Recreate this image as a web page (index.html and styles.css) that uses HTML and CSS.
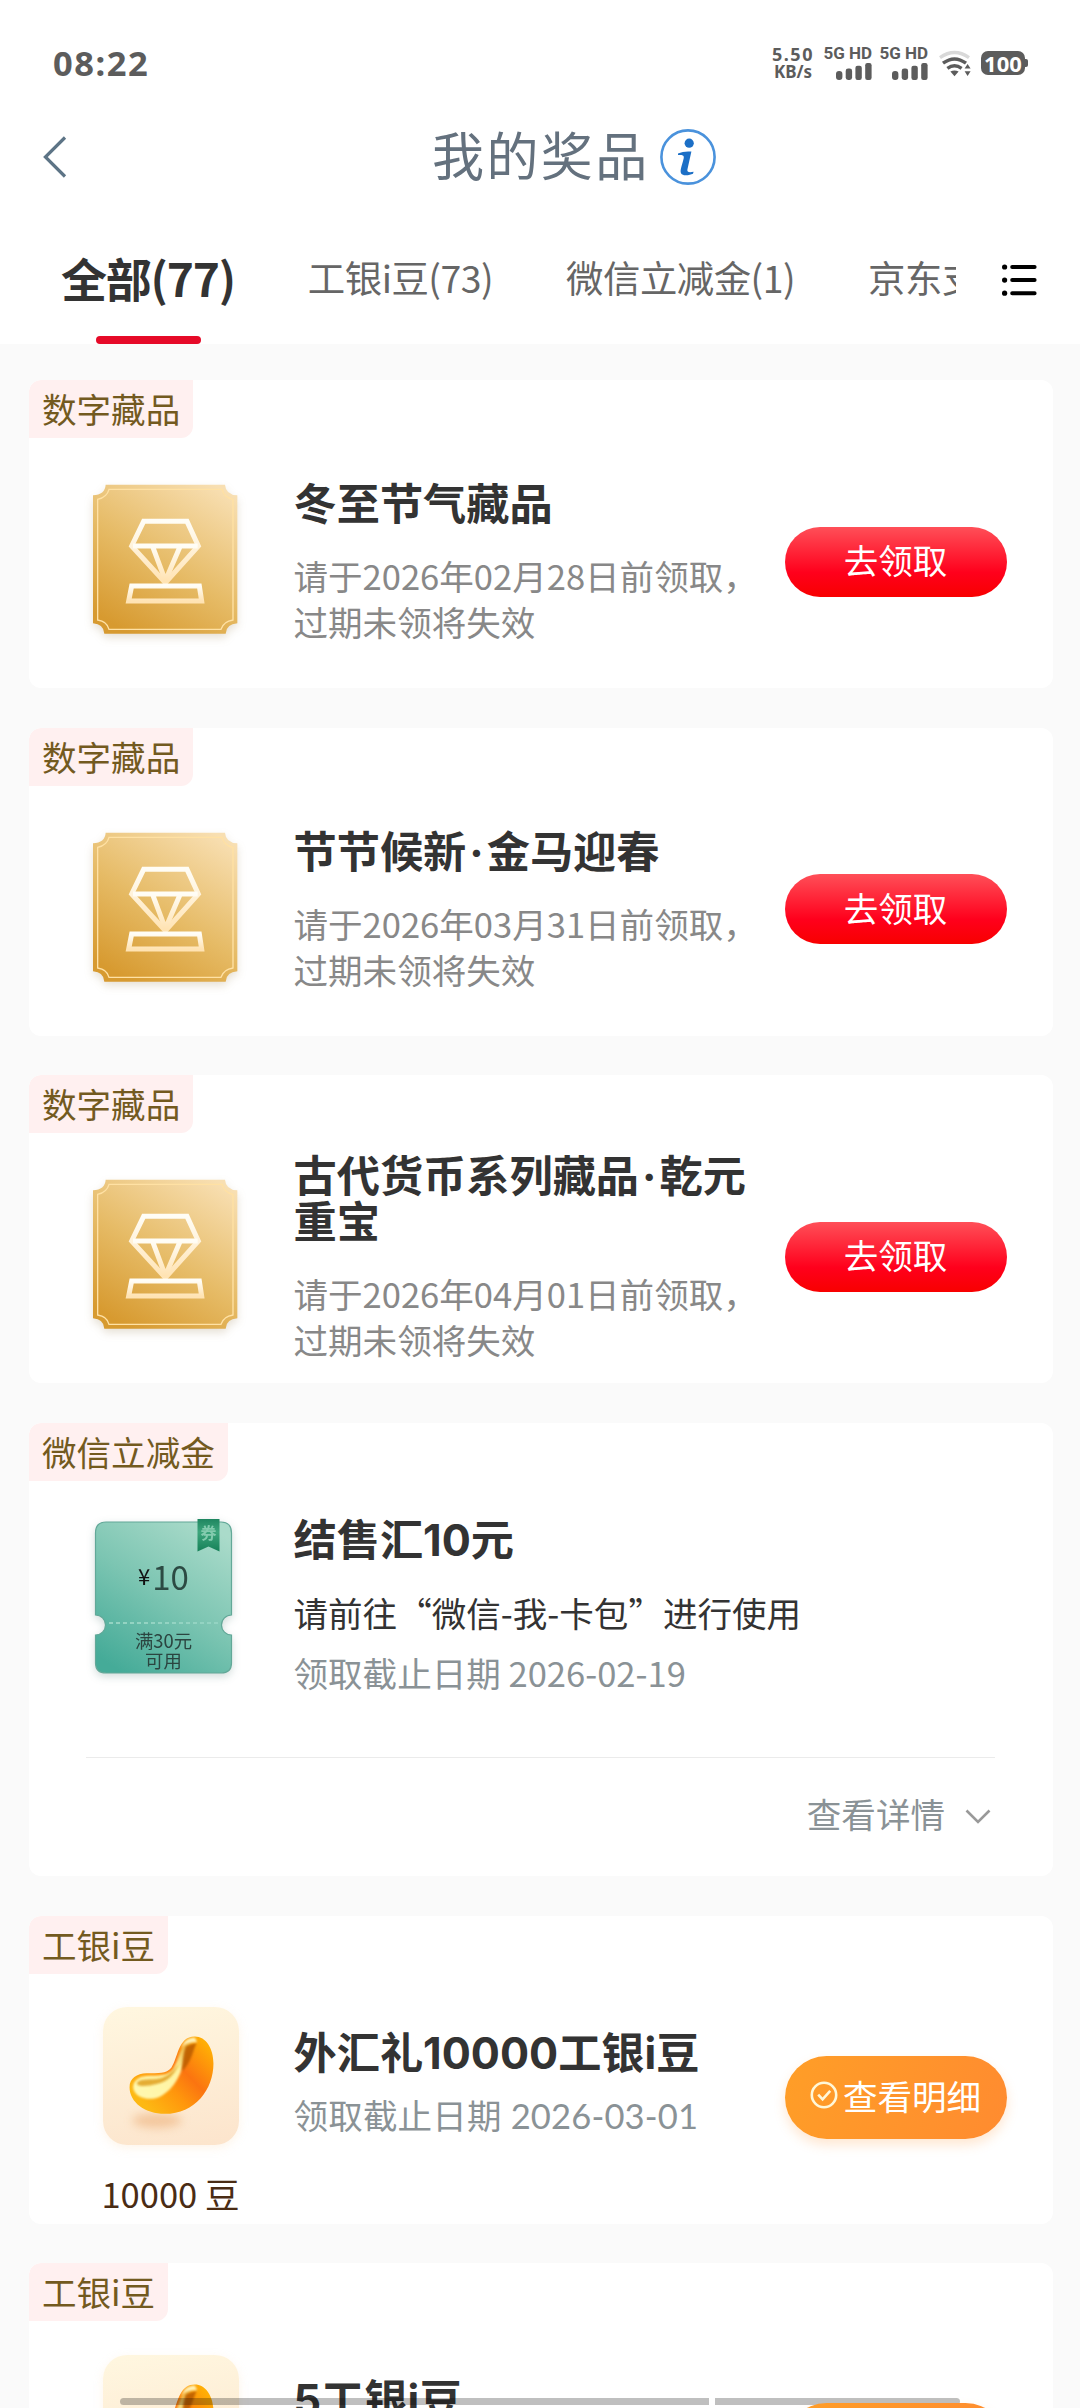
FILE: index.html
```html
<!DOCTYPE html>
<html lang="zh-CN">
<head>
<meta charset="utf-8">
<title>我的奖品</title>
<link rel="stylesheet" href="styles.css">
</head>
<body>
<svg class="defs" width="0" height="0" aria-hidden="true">
  <defs>
    <linearGradient id="gold" x1="0.25" y1="1" x2="0.85" y2="0">
      <stop offset="0" stop-color="#d79a30"/><stop offset="0.45" stop-color="#e6bb66"/><stop offset="1" stop-color="#f8dfb2"/>
    </linearGradient>
    <linearGradient id="cream" x1="0" y1="0" x2="0" y2="1">
      <stop offset="0" stop-color="#fffdf6"/><stop offset="1" stop-color="#ffe3b3"/>
    </linearGradient>
    <linearGradient id="mint" x1="0.2" y1="1" x2="0.8" y2="0">
      <stop offset="0" stop-color="#45ab98"/><stop offset="0.5" stop-color="#7cc5b2"/><stop offset="1" stop-color="#aadbca"/>
    </linearGradient>
    <linearGradient id="ribbon" x1="0" y1="0" x2="0" y2="1">
      <stop offset="0" stop-color="#1f8660"/><stop offset="0.4" stop-color="#3da57c"/><stop offset="1" stop-color="#168158"/>
    </linearGradient>
    <linearGradient id="bean-body" x1="0.2" y1="0.9" x2="1" y2="0.2">
      <stop offset="0" stop-color="#fdb813"/><stop offset="0.35" stop-color="#ff960c"/><stop offset="0.6" stop-color="#fb7410"/><stop offset="1" stop-color="#ffae05"/>
    </linearGradient>
    <linearGradient id="bean-shine" x1="0" y1="0.8" x2="1" y2="0">
      <stop offset="0" stop-color="#fff8b0"/><stop offset="0.6" stop-color="#fff3a0"/><stop offset="1" stop-color="#e59a18"/>
    </linearGradient>
    <filter id="soft" x="-30%" y="-30%" width="160%" height="160%"><feGaussianBlur stdDeviation="3"/></filter>
    <filter id="softer" x="-80%" y="-200%" width="260%" height="500%"><feGaussianBlur stdDeviation="15"/></filter>
    <symbol id="medal" viewBox="24 26 435 453">
      <path d="M62 28H420Q422 58 457 60V444Q424 446 422 475H58Q56 446 24 444V60Q60 58 62 28Z" fill="url(#gold)"/>
      <path d="M72 42H412Q416 66 444 72V434Q416 438 408 462H72Q66 438 38 434V72Q66 66 72 42Z" fill="none" stroke="#ffe1a4" stroke-width="4"/>
      <g fill="none" stroke="url(#cream)" stroke-width="15">
        <path d="M176 138H306L340 212L241 322L140 212Z"/>
        <path d="M144 212H338M203 214L241 316L285 214"/>
        <path d="M140 332H343L350 377H131Z"/>
      </g>
    </symbol>
    <symbol id="bean" viewBox="22 20 410 416">
      <ellipse cx="185" cy="362" rx="75" ry="22" fill="#e9a468" opacity="0.5" filter="url(#softer)"/>
      <path d="M299 109C332 109 355 145 355 190C355 268 300 342 208 342C150 342 102 308 102 262C102 235 124 221 153 220C190 219 212 222 228 203C248 176 247 109 299 109Z" fill="url(#bean-body)"/>
      <path d="M280 122C256 134 250 180 234 207C216 230 188 226 153 228C130 230 112 242 113 264C118 292 156 304 190 292C240 268 262 215 272 160C275 146 282 132 292 124Z" fill="url(#bean-shine)" filter="url(#soft)"/>
      <path d="M250 190C242 216 222 244 184 252C160 258 132 262 124 252C124 240 146 238 170 238C208 238 232 218 250 190Z" fill="#dc9410" opacity="0.75" filter="url(#soft)"/>
      <path d="M272 138C262 164 262 190 260 214C286 192 292 156 304 128Z" fill="#b95c06" opacity="0.85" filter="url(#soft)"/>
      <path d="M299 112C278 112 264 124 258 144C268 130 282 126 306 126Z" fill="#fff2b8" filter="url(#soft)"/>
    </symbol>
    <symbol id="signal" viewBox="0 0 36 17">
      <rect x="0" y="8" width="6.4" height="9" rx="3"/><rect x="9.7" y="5.6" width="6.4" height="11.4" rx="2.4"/>
      <rect x="19.4" y="2.8" width="6.4" height="14.2" rx="2.2"/><rect x="29.2" y="0" width="6.4" height="17" rx="2.2"/>
    </symbol>
    <symbol id="check" viewBox="0 0 28 28">
      <circle cx="14" cy="14" r="12.2"/><path d="M8.2 13.6L12.6 18.4L20.2 9.8"/>
    </symbol>
  </defs>
</svg>

<div class="screen">
  <header class="top">
    <div class="status">
      <span class="clock">08:22</span>
      <div class="status-right">
        <div class="speed"><span class="rate">5.50</span><span class="unit">KB/s</span></div>
        <div class="cell"><span>5G HD</span><svg class="bars"><use href="#signal"/></svg></div>
        <div class="cell"><span>5G HD</span><svg class="bars"><use href="#signal"/></svg></div>
        <svg class="wifi" viewBox="0 0 32 26" fill="none" stroke-width="3.4">
          <path d="M1 6.6Q15.5 -3.6 30 6.6" stroke="#d9d9d9"/>
          <path d="M4 12.2Q15.5 3.6 27 12.2M8.4 17.4Q15.5 12.2 22.6 17.4" stroke="#5c5c5c"/>
          <path d="M11.4 20.6Q15.5 18.4 19.6 20.6L15.5 25.2Z" fill="#5c5c5c"/>
          <path d="M28.6 13L31.6 17.6H25.6ZM28.6 25L25.6 20.2H31.6Z" fill="#5c5c5c"/>
        </svg>
        <div class="battery">100</div>
      </div>
    </div>
    <div class="titlebar">
      <svg class="back" viewBox="0 0 24 42"><path d="M22 1.5L2.4 21L22 40.5"/></svg>
      <div class="heading">
        <h1>我的奖品</h1>
        <svg class="info" viewBox="0 0 56 56">
          <circle cx="28" cy="28" r="26.6" fill="none" stroke="#4a92dc" stroke-width="2.6"/>
          <circle cx="29.2" cy="14.2" r="4.6" fill="#1c6fc6"/>
          <path d="M18 24.6C22 22.6 27 22 31.4 22.6L27.4 40.6C27 43 28.6 43.6 33.6 42.8L33 44.8C28.6 46.8 20.6 47.6 20.6 42.2C20.6 39 23.6 31 23.8 28.4C24 25.6 21 26 18 26Z" fill="#1c6fc6"/>
        </svg>
      </div>
    </div>
    <nav class="tabs">
      <div class="tab-strip">
        <span class="tab active">全部(77)</span>
        <span class="tab">工银i豆(73)</span>
        <span class="tab">微信立减金(1)</span>
        <span class="tab">京东支</span>
      </div>
      <svg class="menu" viewBox="0 0 35 32"><g fill="#000"><circle cx="2.6" cy="3" r="2.6"/><circle cx="2.6" cy="16.1" r="2.6"/><circle cx="2.6" cy="29.2" r="2.6"/></g><path d="M10.2 3H32.6M10.2 16.1H32.6M10.2 29.2H32.6" stroke="#000" stroke-width="4" stroke-linecap="round"/></svg>
    </nav>
  </header>

  <main class="list">
    <section class="card">
      <span class="tag">数字藏品</span>
      <div class="body">
        <svg class="medal"><use href="#medal"/></svg>
        <div class="text"><h2>冬至节气藏品</h2><p>请于2026年02月28日前领取，过期未领将失效</p></div>
        <button class="btn red">去领取</button>
      </div>
    </section>
    <section class="card">
      <span class="tag">数字藏品</span>
      <div class="body">
        <svg class="medal"><use href="#medal"/></svg>
        <div class="text"><h2>节节候新<span class="dot">·</span>金马迎春</h2><p>请于2026年03月31日前领取，过期未领将失效</p></div>
        <button class="btn red">去领取</button>
      </div>
    </section>
    <section class="card">
      <span class="tag">数字藏品</span>
      <div class="body">
        <svg class="medal"><use href="#medal"/></svg>
        <div class="text"><h2>古代货币系列藏品<span class="dot">·</span>乾元重宝</h2><p>请于2026年04月01日前领取，过期未领将失效</p></div>
        <button class="btn red">去领取</button>
      </div>
    </section>
    <section class="card coupon">
      <span class="tag">微信立减金</span>
      <div class="body">
        <div class="ticket">
          <svg class="ticket-shape" viewBox="0 0 137 156">
            <path d="M11 4H126Q136.500 4 136.500 15V97A10 10 0 0 0 136.500 117V145Q136.500 155 126 155H11Q0.500 155 0.500 145V117A10 10 0 0 0 0.500 97V15Q0.500 4 11 4Z" fill="url(#mint)" stroke="#62a898" stroke-width="1.200"/>
            <path d="M14 105H124" stroke="#93d3c2" stroke-width="2" stroke-dasharray="4 3"/>
            <path d="M102.500 1H124.500V33.500L113.500 28.500L102.500 33.500Z" fill="url(#ribbon)"/>
          </svg>
          <span class="mark">券</span>
          <div class="amount"><small>¥</small>10</div>
          <div class="rule">满30元<br>可用</div>
        </div>
        <div class="text"><h2>结售汇10元</h2><p class="dark">请前往“微信-我-卡包”进行使用</p><p class="date">领取截止日期 2026-02-19</p></div>
      </div>
      <div class="more"><span>查看详情</span><svg class="chevron" viewBox="0 0 26 15"><path d="M1.500 1.500L13 13L24.500 1.500"/></svg></div>
    </section>
    <section class="card beans">
      <span class="tag">工银i豆</span>
      <div class="body">
        <div class="tile-col"><div class="tile"><svg><use href="#bean"/></svg></div><span>10000 豆</span></div>
        <div class="text"><h2>外汇礼10000工银i豆</h2><p class="date geo">领取截止日期 2026-03-01</p></div>
        <button class="btn orange"><svg><use href="#check"/></svg>查看明细</button>
      </div>
    </section>
    <section class="card beans">
      <span class="tag">工银i豆</span>
      <div class="body">
        <div class="tile-col"><div class="tile"><svg><use href="#bean"/></svg></div></div>
        <div class="text"><h2>5工银i豆</h2></div>
        <button class="btn orange" aria-label="查看明细"></button>
      </div>
    </section>
  </main>
  <div class="scrollbars"><i></i><i></i></div>
</div>
</body>
</html>
```

FILE: styles.css
```css
* { box-sizing: border-box; margin: 0; padding: 0; }

html, body { height: 2408px; overflow: hidden; }

body {
  width: 1080px;
  background: #fafafa;
  color: #333;
  font-family: "Noto Sans CJK SC", sans-serif;
  font-size: 34.56px;
}

svg { display: block; overflow: visible; }
.defs { position: absolute; }

.screen { position: relative; height: 2408px; overflow: hidden; }

/* Header */
.top { height: 344px; background: #fff; display: flex; flex-direction: column; }

.status {
  height: 112px;
  padding: 14px 52px 0 53px;
  display: flex;
  align-items: center;
  justify-content: space-between;
  color: #5c5c5c;
  font-weight: 700;
}
.clock { font-family: "Noto Sans", sans-serif; font-size: 34.500px; letter-spacing: 1.500px; line-height: 40px; }
.status-right { display: flex; align-items: center; }
.speed { width: 46px; margin-right: 8px; display: flex; flex-direction: column; align-items: center; font-family: "Noto Sans", sans-serif; }
.speed span { line-height: 18px; white-space: nowrap; }
.rate { font-size: 18px; letter-spacing: 1.500px; }
.unit { font-size: 17px; }
.cell { width: 48px; margin-right: 8px; display: flex; flex-direction: column; align-items: flex-end; gap: 3px; font-family: Roboto, sans-serif; font-size: 17px; line-height: 14px; white-space: nowrap; }
.cell .bars { width: 36px; height: 17px; fill: #5c5c5c; }
.wifi { width: 32px; height: 26px; margin: 2px 10px 0 3px; }
.battery {
  position: relative;
  width: 44px; height: 24px; margin-right: 3px;
  border-radius: 7px;
  background: #5c5c5c; color: #fff;
  font: 700 22px/24px "Noto Sans", sans-serif;
  text-align: center;
}
.battery::after { content: ""; position: absolute; right: -3px; top: 8px; width: 3px; height: 8px; border-radius: 0 2px 2px 0; background: #5c5c5c; }

.titlebar { height: 90px; display: flex; align-items: center; padding-left: 43px; }
.back { width: 24px; height: 42px; fill: none; stroke: #5d7486; stroke-width: 3.200; }
.heading { margin-left: 365px; display: flex; align-items: center; gap: 10px; }
h1 { margin-top: -7px; font-size: 52px; font-weight: 400; letter-spacing: 2.400px; line-height: 60px; color: #64717e; }
.info { width: 56px; height: 56px; }

.tabs { flex: 1; display: flex; padding-left: 61px; }
.tab-strip { width: 895px; overflow: hidden; display: flex; gap: 73px; white-space: nowrap; }
.tab { flex: none; height: 142px; line-height: 151px; font-size: 37.400px; letter-spacing: -0.500px; color: #666; }
.tab.active { position: relative; font-size: 46px; font-weight: 700; color: #333; letter-spacing: -1.200px; }
.tab.active::after { content: ""; position: absolute; left: 35px; bottom: 0; width: 105px; height: 8px; border-radius: 4px; background: #e60a28; }
.menu { width: 35px; height: 32px; margin: 62px 0 0 46px; }

/* Prize list */
.list { padding: 36px 27px 0 29px; display: flex; flex-direction: column; gap: 39.600px; }
.card { flex: none; height: 308px; border-radius: 12px; background: #fff; display: flex; flex-direction: column; overflow: hidden; }
.tag { align-self: flex-start; height: 58px; padding: 0 13px; line-height: 56px; border-radius: 12px 0 12px 0; background: #fff0f0; color: #735a1f; }
.body { height: 250px; padding: 0 46.500px 0 64px; display: flex; align-items: center; }
.medal { width: 145px; height: 151px; margin: 0 55.500px 7px 0; filter: drop-shadow(0 4px 4px rgba(120, 90, 30, 0.18)); }
.text { flex: 1; padding-right: 14px; }
h2 { font-family: Inter, "Noto Sans CJK SC", sans-serif; font-size: 43.200px; font-weight: 700; line-height: 45.500px; margin-bottom: 24.600px; color: #333; }
.dot { margin: 0 3px; }
p { line-height: 46px; color: #888; }
p.dark { color: #333; margin-bottom: 14.600px; }
p.date { color: #8a9296; }
.btn { flex: none; width: 222px; border: 0; color: #fff; font: inherit; display: flex; align-items: center; justify-content: center; }
.red { height: 70px; margin-bottom: 3px; padding-bottom: 5px; border-radius: 36px; background: linear-gradient(#ff4f58, #ff001c 65%, #f80000); }

/* Coupon */
.coupon { height: 453.200px; }
.coupon .body { height: 276px; padding: 0 29px 24px 66px; }
.ticket { position: relative; width: 137px; height: 156px; margin: 0 61.500px 21px 0; display: flex; flex-direction: column; align-items: center; color: #2b4540; filter: drop-shadow(0 3px 4px rgba(0, 60, 50, 0.18)); }
.ticket-shape { position: absolute; inset: 0; width: 137px; height: 156px; }
.amount { position: relative; margin-top: 36px; font-size: 33px; line-height: 44px; color: #2c4a43; }
.amount small { font-size: 22px; color: #111; margin-right: 2px; position: relative; top: -5px; }
.rule { position: relative; margin-top: 29px; text-align: center; font-size: 18.400px; line-height: 19.700px; }
.mark { position: absolute; left: 105.500px; top: 4px; font-size: 16px; line-height: 20px; color: #83cbae; font-weight: 700; z-index: 1; }
.more { flex: 1; margin: 0 58px 0 57px; padding: 0 4px 7px 0; border-top: 1px solid #ebebeb; display: flex; align-items: center; justify-content: flex-end; gap: 20px; color: #8a9296; }
.chevron { width: 26px; height: 15px; fill: none; stroke: #999; stroke-width: 2.600; margin-top: 6px; }

/* Bean prizes */
.beans .body { align-items: flex-start; }
.tile-col { width: 155px; margin: 33.700px 45.500px 0 0; display: flex; flex-direction: column; align-items: center; gap: 25px; color: #4a2c14; line-height: 46px; white-space: nowrap; }
.tile { width: 136px; height: 138px; border-radius: 24px; background: linear-gradient(170deg, #fff7e0, #fce4cc); box-shadow: 0 3px 10px rgba(250, 215, 170, 0.25); }
.tile svg { width: 136px; height: 138px; }
.beans .text { padding-top: 57px; padding-right: 0; }
.beans h2 { margin-bottom: 17px; white-space: nowrap; }
.geo { font-family: Lato, "Noto Sans CJK SC", sans-serif; letter-spacing: 0.150px; white-space: nowrap; }
.orange { height: 83px; margin-top: 82px; padding-bottom: 5px; border-radius: 42px; background: linear-gradient(110deg, #ff9e27, #ff8b30); box-shadow: 0 6px 12px rgba(255, 145, 50, 0.22); gap: 5px; }
.orange svg { width: 28px; height: 28px; fill: none; stroke: #fff7d8; stroke-width: 2.600; }
.beans:last-child .btn { position: relative; z-index: 3; }

/* Overlay scroll indicators */
.scrollbars { position: absolute; left: 120px; top: 2398px; display: flex; gap: 6px; }
.scrollbars i { width: 589px; height: 7px; border-radius: 4px 0 0 4px; background: rgba(0, 0, 0, 0.25); }
.scrollbars i + i { width: 245px; border-radius: 0 4px 4px 0; }
```
